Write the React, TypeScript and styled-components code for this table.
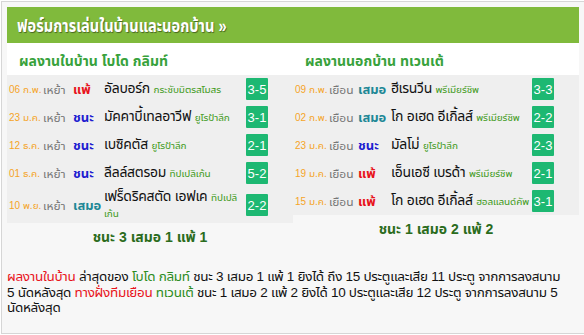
import styled, { createGlobalStyle } from 'styled-components'

const GlobalStyle = createGlobalStyle`
  body {
    margin: 0;
    background: #ffffff;
    font-family: "Liberation Sans", "Noto Sans Thai UI", "Noto Sans Thai", sans-serif;
  }
`

type Result = 'win' | 'draw' | 'loss'

interface Match {
  date: string
  venue: string
  result: Result
  team: string
  league: string
  score: string
}

const homeMatches: Match[] = [
  { date: '06 ก.พ.', venue: 'เหย้า', result: 'loss', team: 'อัลบอร์ก', league: 'กระชับมิตรสโมสร', score: '3-5' },
  { date: '23 ม.ค.', venue: 'เหย้า', result: 'win', team: 'มัคคาบี้เทลอาวีฟ', league: 'ยูโรป้าลีก', score: '3-1' },
  { date: '12 ธ.ค.', venue: 'เหย้า', result: 'win', team: 'เบซิคตัส', league: 'ยูโรป้าลีก', score: '2-1' },
  { date: '01 ธ.ค.', venue: 'เหย้า', result: 'win', team: 'ลีลล์สตรอม', league: 'ทิปเปลิเก้น', score: '5-2' },
  { date: '10 พ.ย.', venue: 'เหย้า', result: 'draw', team: 'เฟร็ดริคสตัด เอฟเค', league: 'ทิปเปลิเก้น', score: '2-2' },
]

const awayMatches: Match[] = [
  { date: '09 ก.พ.', venue: 'เยือน', result: 'draw', team: 'ฮีเรนวีน', league: 'พรีเมียร์ชิพ', score: '3-3' },
  { date: '02 ก.พ.', venue: 'เยือน', result: 'draw', team: 'โก อเฮด อีเกิ้ลส์', league: 'พรีเมียร์ชิพ', score: '2-2' },
  { date: '23 ม.ค.', venue: 'เยือน', result: 'win', team: 'มัลโม่', league: 'ยูโรป้าลีก', score: '2-3' },
  { date: '19 ม.ค.', venue: 'เยือน', result: 'loss', team: 'เอ็นเอซี เบรด้า', league: 'พรีเมียร์ชิพ', score: '2-1' },
  { date: '15 ม.ค.', venue: 'เยือน', result: 'loss', team: 'โก อเฮด อีเกิ้ลส์', league: 'ฮอลแลนด์คัพ', score: '3-1' },
]

const resultLabel: Record<Result, string> = { win: 'ชนะ', draw: 'เสมอ', loss: 'แพ้' }
const resultColor: Record<Result, string> = { win: '#1d1dd0', draw: '#1e8896', loss: '#e8141b' }

const Box = styled.div`
  margin: 1px;
  width: 572px;
  height: 321px;
  padding: 5px;
  border: 1px solid #d6d6d6;
  background: #f7f7f7;
`

const Header = styled.h2`
  margin: 0;
  height: 36px;
  display: flex;
  align-items: center;
  padding-left: 10px;
  background: #80ba3c;
  color: #ffffff;
  font-size: 19px;
  font-weight: 700;
  text-shadow: 1px 1px 1px rgba(0, 0, 0, 0.45);
`

// the reference title font is a narrow Thai face, so squeeze the fallback to the same width
const Title = styled.span`
  display: inline-block;
  white-space: nowrap;
  transform: scaleX(0.77);
  transform-origin: left center;
`

const Columns = styled.div`
  display: grid;
  grid-template-columns: 286px 286px;
  align-items: start;
`

const Column = styled.div`
  display: flex;
  flex-direction: column;
`

const SubTitle = styled.div`
  height: 32px;
  padding: 6px 0 0 12px;
  box-sizing: border-box;
  background: #ffffff;
  color: #38a23c;
  font-size: 14px;
  font-weight: 700;
  line-height: 24px;
`

const Row = styled.div<{ $cols: string }>`
  display: grid;
  grid-template-columns: ${p => p.$cols} 1fr 22px;
  align-items: center;
  min-height: 28px;
  padding: 2px 25px 2px 0;
  background: #efefef;
  box-sizing: border-box;
`

const DateCell = styled.span`
  padding-left: 2px;
  color: #f5a427;
  font-size: 10px;
  white-space: nowrap;
`

const Venue = styled.span`
  color: #777777;
  font-size: 12px;
`

const ResultCell = styled.span<{ $color: string }>`
  color: ${p => p.$color};
  font-size: 13px;
  font-weight: 700;
  white-space: nowrap;
`

const Team = styled.span`
  color: #111111;
  font-size: 14px;
  line-height: 15px;
  letter-spacing: -0.3px;
`

const League = styled.span`
  color: #3e9a20;
  font-size: 10px;
  letter-spacing: -0.1px;
`

const Score = styled.span`
  width: 22px;
  height: 22px;
  display: flex;
  align-items: center;
  justify-content: center;
  background: #1db872;
  color: #ffffff;
  font-size: 13px;
  border-radius: 1px;
`

const Summary = styled.div`
  height: 26px;
  display: flex;
  align-items: center;
  justify-content: center;
  color: #2b6c1d;
  font-size: 14px;
  font-weight: 700;
`

const Paragraph = styled.p`
  margin: 20px 0 0;
  font-size: 13.5px;
  line-height: 15.5px;
  letter-spacing: -0.3px;
  color: #111111;
`

const Red = styled.span`
  color: #e8141b;
`

const Green = styled.span`
  color: #2c8c22;
`

const NoWrap = styled.span`
  white-space: nowrap;
`

function MatchTable({ matches, cols, title, summary }: { matches: Match[]; cols: string; title: string; summary: string }) {
  return (
    <Column>
      <SubTitle>{title}</SubTitle>
      {matches.map((m, i) => (
        <Row key={i} $cols={cols}>
          <DateCell>{m.date}</DateCell>
          <Venue>{m.venue}</Venue>
          <ResultCell $color={resultColor[m.result]}>{resultLabel[m.result]}</ResultCell>
          <Team>
            {m.team} <League>{m.league}</League>
          </Team>
          <Score>{m.score}</Score>
        </Row>
      ))}
      <Summary>{summary}</Summary>
    </Column>
  )
}

export default function App() {
  return (
    <>
      <GlobalStyle />
      <Box>
        <Header>
          <Title>ฟอร์มการเล่นในบ้านและนอกบ้าน »</Title>
        </Header>
        <Columns>
          <MatchTable
            matches={homeMatches}
            cols="36px 30px 31px"
            title="ผลงานในบ้าน โบโด กลิมท์"
            summary="ชนะ 3 เสมอ 1 แพ้ 1"
          />
          <MatchTable
            matches={awayMatches}
            cols="36px 29px 33px"
            title="ผลงานนอกบ้าน ทเวนเต้"
            summary="ชนะ 1 เสมอ 2 แพ้ 2"
          />
        </Columns>
        <Paragraph>
          <Red>ผลงานในบ้าน</Red> ล่าสุดของ <Green>โบโด กลิมท์</Green> ชนะ 3 เสมอ 1 แพ้ 1 ยิงได้ ถึง 15 ประตูและเสีย 11 ประตู{' '}
          <NoWrap>จากการลงสนาม</NoWrap> <NoWrap>5 นัดหลังสุด</NoWrap> <Red>ทางฝั่งทีมเยือน</Red> <Green>ทเวนเต้</Green> ชนะ
          1 เสมอ 2 แพ้ 2 ยิงได้ 10 ประตูและเสีย 12 ประตู <NoWrap>จากการลงสนาม</NoWrap> 5 <NoWrap>นัดหลังสุด</NoWrap>
        </Paragraph>
      </Box>
    </>
  )
}
